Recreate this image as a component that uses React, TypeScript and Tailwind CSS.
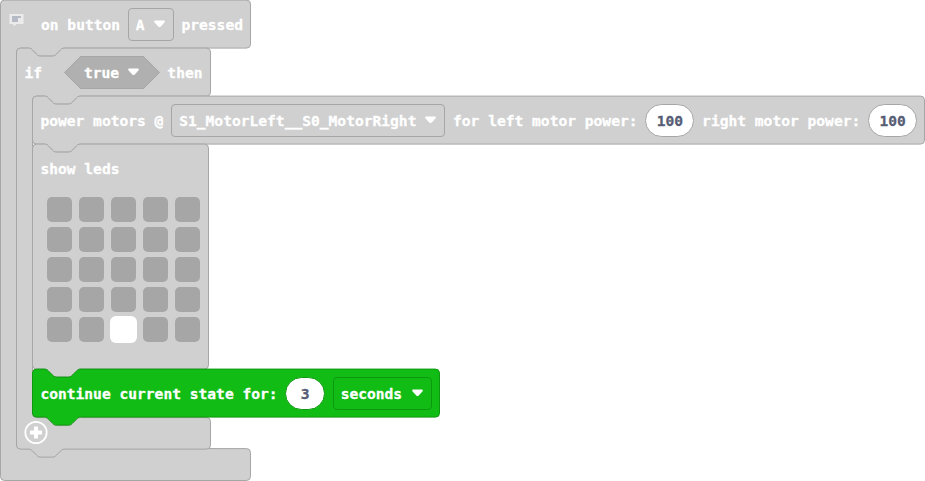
import type { ReactNode } from "react";

const NOTCH = "c2 0 3 1 4 2 l4 4 c1 1 2 2 4 2 h12 c2 0 3 -1 4 -2 l4 -4 c1 -1 2 -2 4 -2";
const NOTCH_BACK = "c-2 0 -3 1 -4 2 l-4 4 c-1 1 -2 2 -4 2 h-12 c-2 0 -3 -1 -4 -2 l-4 -4 c-1 -1 -2 -2 -4 -2";

function statementPath(w: number, h: number) {
  return `M0 4 a4 4 0 0 1 4 -4 h8 ${NOTCH} H${w - 4} a4 4 0 0 1 4 4 V${h - 4} a4 4 0 0 1 -4 4 H48 ${NOTCH_BACK} H4 a4 4 0 0 1 -4 -4 z`;
}

function wrapPath(w: number, h: number, mouthEnd: number, notched: boolean) {
  const top = notched ? `h8 ${NOTCH}` : "";
  const bottom = notched ? `H48 ${NOTCH_BACK}` : "";
  return `M0 4 a4 4 0 0 1 4 -4 ${top} H${w - 4} a4 4 0 0 1 4 4 V44 a4 4 0 0 1 -4 4 H64 ${NOTCH_BACK} h-8 a4 4 0 0 0 -4 4 V${mouthEnd - 4} a4 4 0 0 0 4 4 h8 ${NOTCH} H${w - 4} a4 4 0 0 1 4 4 V${h - 4} a4 4 0 0 1 -4 4 ${bottom} H4 a4 4 0 0 1 -4 -4 z`;
}

function Outline({ d, fill = "#d0d0d0", stroke = "#a6a6a6" }: { d: string; fill?: string; stroke?: string }) {
  return (
    <svg className="pointer-events-none absolute inset-0 -z-10 size-full overflow-visible">
      <path d={d} fill={fill} stroke={stroke} strokeWidth="1" transform="translate(.5 .1)" />
    </svg>
  );
}

function Label({ children }: { children: ReactNode }) {
  return <span className="shrink-0 pt-0.5 [-webkit-text-stroke:0.3px_currentColor]">{children}</span>;
}

function Arrow() {
  return (
    <svg className="shrink-0" width="11" height="8" viewBox="0 0 11 8">
      <path d="M1.5 .4 H9.5 C10.8 .4 11.3 1.7 10.4 2.6 L6.7 6.4 Q5.5 7.6 4.3 6.4 L.6 2.6 C-.3 1.7 .2 .4 1.5 .4z" fill="#fff" />
    </svg>
  );
}

function Dropdown({ label, className }: { label: string; className: string }) {
  return (
    <span className={`flex h-[33px] shrink-0 items-center justify-between rounded border pl-[7px] pr-[8px] ${className}`}>
      <Label>{label}</Label>
      <Arrow />
    </span>
  );
}

function NumberPill({ value, className }: { value: number; className: string }) {
  return (
    <span className={`flex h-[33px] shrink-0 items-center justify-center rounded-full border bg-white text-[#575e75] ${className}`}>
      <Label>{value}</Label>
    </span>
  );
}

function LedGrid() {
  return (
    <div className="grid grid-cols-[repeat(5,25px)] gap-x-[7px] gap-y-[5px] pl-[15px] pt-[5px]">
      {Array.from({ length: 25 }, (_, i) => (
        <span
          key={i}
          className={i === 22 ? "h-[25px] rounded-[5px] bg-white ring-1 ring-white" : "h-[25px] rounded-[5px] bg-[#a6a6a6]"}
        />
      ))}
    </div>
  );
}

export default function App() {
  return (
    <main className="h-[481px] w-[925px] overflow-hidden whitespace-pre bg-white font-['DejaVu_Sans_Mono','Liberation_Mono',monospace] text-[14.6px] font-bold leading-5 text-white">
      <section className="relative isolate flex h-full flex-col">
        <Outline d={wrapPath(250, 480.4, 448.5, false)} />
        <header className="flex h-12 items-center gap-[17px] pl-[9px]">
          <svg className="mb-[9px]" width="15" height="12" viewBox="0 0 15 12">
            <path d="M.5 0H14.5V10H7.5L5.5 12L3.5 10H.5z" fill="#ebebeb" />
            <path d="M3 2H12V4H9V8H3z" fill="#b6bac4" />
          </svg>
          <div className="flex items-center gap-[7.7px]">
            <Label>on button</Label>
            <Dropdown label="A" className="w-[46px] border-[#a6a6a6]" />
            <Label>pressed</Label>
          </div>
        </header>

        <section className="relative isolate ml-4 flex h-[401px] flex-col">
          <Outline d={wrapPath(194, 401, 369.5, true)} />
          <header className="flex h-12 items-center pl-[8.4px]">
            <Label>if</Label>
            <span className="relative isolate ml-[22px] mr-[7.4px] flex h-[33px] w-24 items-center justify-between pl-5 pr-[21px]">
              <svg className="absolute inset-0 -z-10" width="96" height="33">
                <path d="M.5 16.5L16.5 .5H79.5L95.5 16.5L79.5 32.5H16.5z" fill="#b0b0b0" stroke="#a6a6a6" />
              </svg>
              <Label>true</Label>
              <Arrow />
            </span>
            <Label>then</Label>
          </header>

          <div className="flex flex-col pl-4">
            <article className="relative isolate flex h-12 items-center gap-[7.8px] pl-[8.4px]">
              <Outline d={statementPath(892, 48)} />
              <Label>power motors @</Label>
              <Dropdown label="S1_MotorLeft__S0_MotorRight" className="w-[274px] border-[#a6a6a6]" />
              <Label>for left motor power:</Label>
              <NumberPill value={100} className="w-[49px] border-[#a6a6a6]" />
              <Label>right motor power:</Label>
              <NumberPill value={100} className="w-[49px] border-[#a6a6a6]" />
            </article>

            <article className="relative isolate flex h-[225px] flex-col">
              <Outline d={statementPath(176, 225)} />
              <div className="flex h-12 items-center pl-[8.4px]">
                <Label>show leds</Label>
              </div>
              <LedGrid />
            </article>

            <article className="relative isolate flex h-12 items-center gap-[7.5px] pl-[8.4px]">
              <Outline d={statementPath(407, 48)} fill="#11bd14" stroke="#0e9710" />
              <Label>continue current state for:</Label>
              <NumberPill value={3} className="w-10 border-[#0e9710]" />
              <Dropdown label="seconds" className="w-[99px] border-[#0e9710]" />
            </article>
          </div>

          <footer className="flex h-8 items-center pl-2">
            <svg width="24" height="24" viewBox="0 0 24 24" fill="none" stroke="#fff">
              <circle cx="12" cy="11.5" r="10.7" strokeWidth="1.7" />
              <path d="M12 5.5v12M6 11.5h12" strokeWidth="4" />
            </svg>
          </footer>
        </section>
      </section>
    </main>
  );
}
